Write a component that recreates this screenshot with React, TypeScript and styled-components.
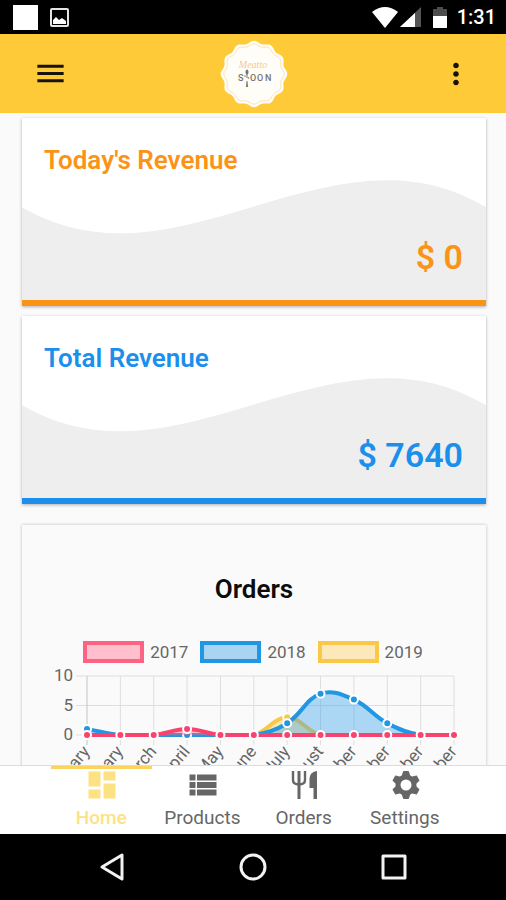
import React from "react";
import styled, { createGlobalStyle } from "styled-components";
import { MdDashboard, MdMenu, MdMoreVert, MdViewList } from "react-icons/md";

const GlobalStyle = createGlobalStyle`
  *, *::before, *::after { box-sizing: border-box; }
  body { margin: 0; background: #fafafa; font-family: Roboto, sans-serif; }
`;

const Screen = styled.div`
  display: flex;
  flex-direction: column;
  height: 100vh;
`;

const StatusBar = styled.div`
  flex: none;
  display: flex;
  align-items: center;
  justify-content: space-between;
  height: 34px;
  padding: 0 10px 0 13px;
  background: #000;
  color: #fff;
`;

const StatusGroup = styled.div<{ $gap: number }>`
  display: flex;
  align-items: center;
  gap: ${(p) => p.$gap}px;
`;

const Clock = styled.span`
  margin-left: 8px;
  font-size: 20px;
  font-weight: 500;
  line-height: 24px;
`;

const AppBar = styled.header`
  flex: none;
  display: flex;
  align-items: center;
  justify-content: space-between;
  height: 79px;
  padding: 0 33px;
  background: #ffca38;
`;

const IconButton = styled.button`
  display: flex;
  padding: 0;
  border: 0;
  background: none;
  color: #17130a;
  cursor: pointer;
`;

const Content = styled.main`
  flex: 1;
  min-height: 0;
  overflow-y: auto;
  scrollbar-width: none;
  padding: 5px 20px 0 22px;
`;

const RevenueCard = styled.section<{ $color: string }>`
  position: relative;
  display: flex;
  flex-direction: column;
  justify-content: space-between;
  height: 188px;
  margin-bottom: 10px;
  padding: 26px 23px 21px 22px;
  border-bottom: 6px solid ${(p) => p.$color};
  background: #fff;
  box-shadow: 0 1px 3px rgba(0, 0, 0, 0.3);
  color: ${(p) => p.$color};
`;

const Wave = styled.svg`
  position: absolute;
  left: 0;
  bottom: 0;
  width: 100%;
  height: 123px;
  fill: #eee;
`;

const RevenueTitle = styled.h2`
  position: relative;
  margin: 0;
  font-size: 26px;
  font-weight: 600;
  line-height: 32px;
`;

const Amount = styled.p`
  position: relative;
  margin: 0;
  font-size: 34px;
  font-weight: 600;
  line-height: 44px;
  text-align: right;
`;

const OrdersCard = styled.section`
  margin: 21px 0 24px;
  padding: 48px 0 24px;
  background: #fafafa;
  box-shadow: 0 0 3px rgba(0, 0, 0, 0.25);
`;

const OrdersTitle = styled.h2`
  margin: 0;
  color: #0c0c0c;
  font-size: 26px;
  font-weight: 600;
  line-height: 32px;
  text-align: center;
`;

const Legend = styled.ul`
  display: flex;
  justify-content: center;
  gap: 12px;
  margin: 36px 0 7px;
  padding: 0 2px 0 0;
  list-style: none;
`;

const LegendItem = styled.li`
  display: flex;
  align-items: center;
  gap: 6px;
  color: #666;
  font-size: 17px;
  line-height: 22px;
`;

const Swatch = styled.span<{ $line: string; $fill: string }>`
  width: 61px;
  height: 22px;
  border: 4px solid ${(p) => p.$line};
  background: ${(p) => p.$fill};
`;

const Plot = styled.svg`
  display: block;
  overflow: visible;
  width: 100%;
  font-size: 17px;
`;

const TabBar = styled.nav`
  flex: none;
  display: flex;
  justify-content: center;
  height: 69px;
  border-top: 1px solid #dcdcdc;
  background: #fff;
`;

const Tab = styled.a<{ $active?: boolean }>`
  display: flex;
  flex-direction: column;
  align-items: center;
  justify-content: space-between;
  width: 20%;
  padding-bottom: 5px;
  border-top: 3px solid ${(p) => (p.$active ? "#fad45f" : "transparent")};
  color: ${(p) => (p.$active ? "#fde283" : "#666")};
  font-size: 19px;
  font-weight: ${(p) => (p.$active ? 500 : 400)};
  line-height: 22px;
  text-decoration: none;
`;

const TabIcon = styled.span`
  display: flex;
  align-items: center;
  justify-content: center;
  height: 32px;
  padding-left: 2px;
`;

const SystemNav = styled.nav`
  flex: none;
  display: flex;
  justify-content: center;
  gap: 109px;
  height: 66px;
  background: #000;
`;

const SystemButton = styled.button`
  display: flex;
  align-items: center;
  justify-content: center;
  width: 32px;
  padding: 0;
  border: 0;
  background: none;
  color: #f2f2f2;
`;

const months = [
  "January", "February", "March", "April", "May", "June",
  "July", "August", "September", "October", "November", "December",
];

const series = [
  { year: "2017", line: "#f9436f", swatch: "#ff6384", fill: "#ffbfcd", area: "rgba(255, 99, 132, 0.4)", data: [0, 0, 0, 1, 0, 0, 0, 0, 0, 0, 0, 0] },
  { year: "2018", line: "#2196e3", swatch: "#2196e3", fill: "#a9d5f2", area: "rgba(54, 162, 235, 0.4)", data: [1, 0, 0, 0, 0, 0, 2, 7, 6, 2, 0, 0] },
  { year: "2019", line: "#fac846", swatch: "#fac846", fill: "#fce8b8", area: "rgba(250, 200, 70, 0.4)", data: [0, 0, 0, 0, 0, 0, 3, 0, 0, 0, 0, 0] },
];

const plot = { left: 65, right: 432, top: 6, bottom: 65 };
const px = (i: number) => plot.left + (i * (plot.right - plot.left)) / (months.length - 1);
const py = (v: number) => plot.bottom - (v * (plot.bottom - plot.top)) / 10;

function curve(data: number[]) {
  const pts = data.map((v, i) => ({ x: px(i), y: py(v) }));
  const clamp = (y: number) => Math.min(plot.bottom, Math.max(plot.top, y));
  const handles = pts.map((p, i) => {
    const a = pts[i - 1] ?? p;
    const b = pts[i + 1] ?? p;
    const d1 = Math.hypot(p.x - a.x, p.y - a.y);
    const d2 = Math.hypot(b.x - p.x, b.y - p.y);
    const f1 = (0.4 * d1) / (d1 + d2);
    const f2 = (0.4 * d2) / (d1 + d2);
    return {
      inX: p.x - f1 * (b.x - a.x),
      inY: clamp(p.y - f1 * (b.y - a.y)),
      outX: p.x + f2 * (b.x - a.x),
      outY: clamp(p.y + f2 * (b.y - a.y)),
    };
  });
  return pts
    .map((p, i) =>
      i === 0
        ? `M${p.x} ${p.y}`
        : `C${handles[i - 1].outX} ${handles[i - 1].outY} ${handles[i].inX} ${handles[i].inY} ${p.x} ${p.y}`
    )
    .join(" ");
}

function OrdersChart() {
  return (
    <Plot viewBox="0 0 464 150" role="img" aria-label="Orders per month">
      <g stroke="#dedede">
        {[0, 5, 10].map((v) => (
          <line key={v} x1={plot.left - 11} x2={plot.right} y1={py(v)} y2={py(v)} />
        ))}
        {months.map((m, i) => (
          <line key={m} x1={px(i)} x2={px(i)} y1={plot.top} y2={plot.bottom + 10} stroke={i === 0 ? "#c4c4c4" : undefined} />
        ))}
      </g>
      <g fill="#666" textAnchor="end">
        {[0, 5, 10].map((v) => (
          <text key={v} x={51} y={py(v) + 5}>{v}</text>
        ))}
        {months.map((m, i) => (
          <text key={m} transform={`translate(${px(i) - 1} 78) rotate(-50)`} y={6}>{m}</text>
        ))}
      </g>
      {[...series].reverse().map((s) => (
        <g key={s.year}>
          <path d={`${curve(s.data)} V${plot.bottom} H${plot.left} Z`} fill={s.area} />
          <path d={curve(s.data)} fill="none" stroke={s.line} strokeWidth={4} />
          {s.data.map((v, i) => (
            <circle key={i} cx={px(i)} cy={py(v)} r={4} fill={s.line} stroke="#fff" strokeWidth={2} />
          ))}
        </g>
      ))}
    </Plot>
  );
}

function scallop(radius: number, depth: number) {
  const steps = 144;
  return (
    Array.from({ length: steps }, (_, i) => {
      const a = (i / steps) * Math.PI * 2;
      const r = radius + depth * Math.cos(12 * a);
      return `${i ? "L" : "M"}${(34 + r * Math.sin(a)).toFixed(2)} ${(34 - r * Math.cos(a)).toFixed(2)}`;
    }).join("") + "Z"
  );
}

function Logo() {
  return (
    <svg width="68" height="68" viewBox="0 0 68 68" role="img" aria-label="Meatto Spoon">
      <path d={scallop(32, 1.3)} fill="#fffdf8" />
      <path d={scallop(29, 1.1)} fill="none" stroke="#fae3b8" strokeWidth="1" />
      <text x="33" y="28" textAnchor="middle" fill="#f6c98b" fontFamily="Liberation Serif, serif" fontStyle="italic" fontSize="10">Meatto</text>
      <g fill="#77736c" fontFamily="Roboto, sans-serif" fontSize="9" fontWeight="500">
        <text x="18" y="41">S</text>
        <text x="30" y="41">O</text>
        <text x="37" y="41">O</text>
        <text x="45" y="41">N</text>
      </g>
      <g fill="#77736c">
        <ellipse cx="27" cy="32" rx="1.5" ry="2.5" />
        <path d="M26.500 34h1v4h-1zM26.500 41h1l.5 6h-2z" />
        <circle cx="25" cy="36" r="0.8" />
        <circle cx="28.500" cy="38" r="0.8" />
      </g>
    </svg>
  );
}

function CutleryIcon() {
  return (
    <svg width="27" height="28" viewBox="0 0 27 28" fill="none" stroke="currentColor">
      <path d="M2 0V9Q2 13.500 8 13.500Q14 13.500 14 9V0" strokeWidth="2.400" />
      <path d="M8 0V28" strokeWidth="3" />
      <path d="M26 0V28H22.500V17H18.500V7Q19 1 26 0Z" fill="currentColor" stroke="none" />
    </svg>
  );
}

function GearIcon() {
  return (
    <svg width="28" height="28" viewBox="0 0 28 28">
      <circle cx="14" cy="14" r="8" fill="none" stroke="currentColor" strokeWidth="5" />
      {[0, 60, 120, 180, 240, 300].map((angle) => (
        <path key={angle} d="M11.500 0.500h5l1.500 5.500h-8z" fill="currentColor" stroke="currentColor" strokeLinejoin="round" transform={`rotate(${angle} 14 14)`} />
      ))}
    </svg>
  );
}

const revenue = [
  { title: "Today's Revenue", amount: "$ 0", color: "#fb9316" },
  { title: "Total Revenue", amount: "$ 7640", color: "#1c8fec" },
];

const tabs = [
  { label: "Home", icon: <MdDashboard size={36} />, active: true },
  { label: "Products", icon: <MdViewList size={36} /> },
  { label: "Orders", icon: <CutleryIcon /> },
  { label: "Settings", icon: <GearIcon /> },
];

export default function App() {
  return (
    <Screen>
      <GlobalStyle />
      <StatusBar>
        <StatusGroup $gap={12}>
          <svg width="25" height="25"><rect width="25" height="25" fill="#fff" /></svg>
          <svg width="19" height="19" viewBox="0 0 19 19">
            <rect x="1" y="1" width="17" height="17" rx="1" fill="none" stroke="#e4e4e4" strokeWidth="2" />
            <path d="M3 16v-4l3-3 3 3 3-2 4 3v3z" fill="#fff" />
          </svg>
        </StatusGroup>
        <StatusGroup $gap={2}>
          <svg width="26" height="21" viewBox="0 0 26 21"><path d="M0 5Q13-5 26 5L13 21z" fill="#fff" /></svg>
          <svg width="21" height="20" viewBox="0 0 21 20">
            <path d="M0 20L21 0v20z" fill="#555" />
            <path d="M0 20L15 6v14z" fill="#fff" />
          </svg>
          <svg width="24" height="21" viewBox="0 0 24 21">
            <path d="M10 2h4V0h6v2h4v8H10z" fill="#4c4c4c" />
            <path d="M10 9h14v12H10z" fill="#fff" />
          </svg>
          <Clock>1:31</Clock>
        </StatusGroup>
      </StatusBar>

      <AppBar>
        <IconButton aria-label="Open menu"><MdMenu size={35} /></IconButton>
        <Logo />
        <IconButton aria-label="More options"><MdMoreVert size={34} /></IconButton>
      </AppBar>

      <Content>
        {revenue.map((r) => (
          <RevenueCard key={r.title} $color={r.color}>
            <Wave viewBox="0 0 464 122" preserveAspectRatio="none" aria-hidden="true">
              <path d="M0 30C155 120 309-62 464 30V122H0z" />
            </Wave>
            <RevenueTitle>{r.title}</RevenueTitle>
            <Amount>{r.amount}</Amount>
          </RevenueCard>
        ))}
        <OrdersCard>
          <OrdersTitle>Orders</OrdersTitle>
          <Legend>
            {series.map((s) => (
              <LegendItem key={s.year}>
                <Swatch $line={s.swatch} $fill={s.fill} />
                {s.year}
              </LegendItem>
            ))}
          </Legend>
          <OrdersChart />
        </OrdersCard>
      </Content>

      <TabBar>
        {tabs.map((t) => (
          <Tab key={t.label} href={`#${t.label.toLowerCase()}`} $active={t.active} aria-current={t.active ? "page" : undefined}>
            <TabIcon>{t.icon}</TabIcon>
            {t.label}
          </Tab>
        ))}
      </TabBar>

      <SystemNav aria-label="System">
        <SystemButton aria-label="Back">
          <svg width="28" height="28" viewBox="0 0 28 28" fill="none" stroke="currentColor" strokeWidth="3" strokeLinejoin="round"><path d="M24 2v24L4 14z" /></svg>
        </SystemButton>
        <SystemButton aria-label="Home screen">
          <svg width="28" height="28" viewBox="0 0 28 28" fill="none" stroke="currentColor" strokeWidth="3"><circle cx="14" cy="14" r="12" /></svg>
        </SystemButton>
        <SystemButton aria-label="Recent apps">
          <svg width="28" height="28" viewBox="0 0 28 28" fill="none" stroke="currentColor" strokeWidth="3" strokeLinejoin="round"><path d="M3 3h22v22H3z" /></svg>
        </SystemButton>
      </SystemNav>
    </Screen>
  );
}
